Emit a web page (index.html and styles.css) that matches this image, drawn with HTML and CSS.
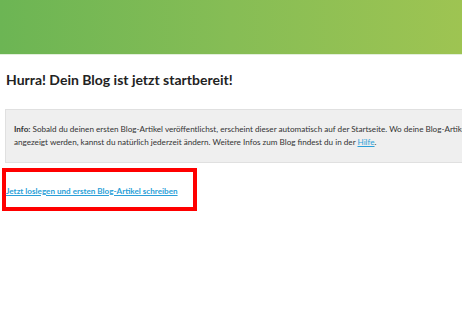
FILE: index.html
```
<!DOCTYPE html>
<html lang="de">
<head>
<meta charset="utf-8">
<link rel="stylesheet" href="styles.css">
</head>
<body>
<header class="topbar"></header>
<main class="content">
  <h1 class="title">Hurra! Dein Blog ist jetzt startbereit!</h1>
  <div class="info">
    <p><b>Info:</b> Sobald du deinen ersten Blog-Artikel veröffentlichst, erscheint dieser automatisch auf der Startseite. Wo deine Blog-Artikel<br>angezeigt werden, kannst du natürlich jederzeit ändern. Weitere Infos zum Blog findest du in der <a href="#">Hilfe</a>.</p>
  </div>
  <div class="highlight">
    <a class="start" href="#">Jetzt loslegen und ersten Blog-Artikel schreiben</a>
  </div>
</main>
</body>
</html>
```
FILE: styles.css
```
html, body {
  margin: 0;
  padding: 0;
  background: #ffffff;
  overflow: hidden;
  width: 462px;
  height: 334px;
}
body {
  font-family: "Lato", "Open Sans", sans-serif;
  color: #333;
}
.topbar {
  height: 54px;
  background: linear-gradient(to right, #6cb554 0%, #86bd55 50%, #9ec452 100%);
  border-bottom: 1px solid #e2efdb;
}
.content {
  padding-left: 6px;
}
.title {
  margin: 17px 0 0 0;
  font-size: 14px;
  line-height: 16px;
  font-weight: 700;
  color: #222;
}
.info {
  margin: 21px 0 0 -1px;
  width: 580px;
  box-sizing: border-box;
  background: #efefef;
  border: 1px solid #e0e0e0;
  padding: 13px 8px 13px 8px;
}
.info p {
  margin: 0;
  font-size: 8.15px;
  line-height: 13px;
  color: #333;
  white-space: nowrap;
}
.info a {
  color: #2a9fd8;
  text-decoration: underline;
}
.highlight {
  margin: 5px 0 0 -4px;
  width: 195px;
  height: 43px;
  box-sizing: border-box;
  border: 4px solid #ff0000;
  display: flex;
  align-items: center;
  padding-left: 0px;
  padding-top: 2px;
}
.start {
  font-size: 8.1px;
  font-weight: 700;
  color: #2a9fd8;
  text-decoration: underline;
}
```
